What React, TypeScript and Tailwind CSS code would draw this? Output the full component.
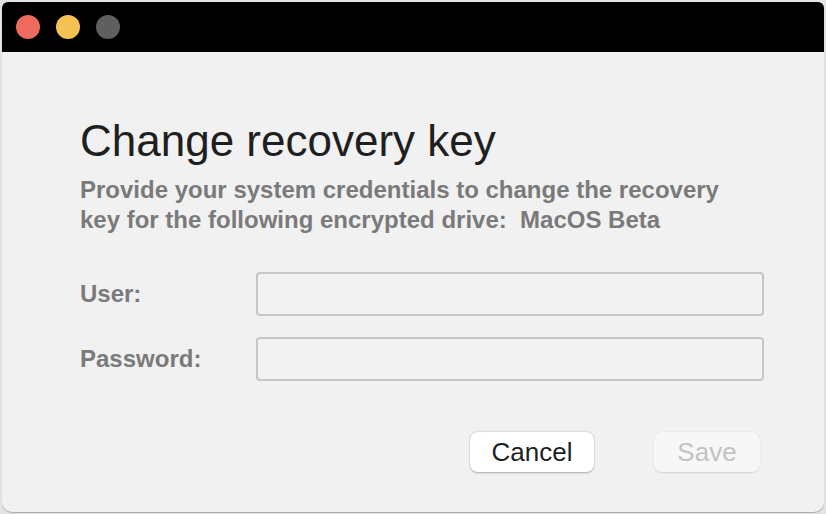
import React from "react";

export default function App() {
  return (
    <div
      className="w-[826px] h-[514px] bg-[#e4e4e4] pt-[2px] pl-[2px] overflow-hidden"
      style={{ fontFamily: '"Liberation Sans", Arial, Helvetica, sans-serif' }}
    >
      <div className="w-[822px] h-[510px] bg-[#f1f1f1] rounded-t-[6px] rounded-b-[10px] overflow-hidden flex flex-col shadow-[0_1px_1px_rgba(0,0,0,0.25)]">
        {/* Title bar */}
        <div className="h-[50px] bg-black flex items-center pl-[14px] gap-[16px] shrink-0">
          <div className="w-[24px] h-[24px] rounded-full bg-[#ee6a5f]" />
          <div className="w-[24px] h-[24px] rounded-full bg-[#f5c152]" />
          <div className="w-[24px] h-[24px] rounded-full bg-[#5f5f5f]" />
        </div>

        {/* Body */}
        <div className="flex flex-col pl-[78px] pr-[60px] pt-[63px]">
          <h1 className="text-[44px] leading-[52px] text-[#1f1f1f] font-normal">
            Change recovery key
          </h1>
          <p className="mt-[8px] text-[24px] leading-[30px] font-bold text-[#7a7a7a] whitespace-pre">
            Provide your system credentials to change the recovery
            <br />
            key for the following encrypted drive:  MacOS Beta
          </p>

          <div className="mt-[37px] flex flex-col gap-[21px]">
            <div className="flex items-center">
              <label className="w-[176px] shrink-0 text-[24px] font-bold text-[#7a7a7a]">
                User:
              </label>
              <div className="w-[508px] shrink-0 h-[44px] border-2 border-[#c6c6c6] rounded-[4px] bg-[#f2f2f2]" />
            </div>
            <div className="flex items-center">
              <label className="w-[176px] shrink-0 text-[24px] font-bold text-[#7a7a7a]">
                Password:
              </label>
              <div className="w-[508px] shrink-0 h-[44px] border-2 border-[#c6c6c6] rounded-[4px] bg-[#f2f2f2]" />
            </div>
          </div>

          <div className="mt-[51px] pr-[4px] flex justify-end gap-[60px]">
            <button className="w-[124px] h-[40px] rounded-[8px] bg-white text-[26px] text-[#1f1f1f] flex items-center justify-center shadow-[0_0.5px_2px_rgba(0,0,0,0.3)]">
              Cancel
            </button>
            <button className="w-[106px] h-[40px] rounded-[8px] bg-[#f7f7f7] text-[26px] text-[#c3c3c3] flex items-center justify-center shadow-[0_0.5px_1.5px_rgba(0,0,0,0.12)]">
              Save
            </button>
          </div>
        </div>
      </div>
    </div>
  );
}
